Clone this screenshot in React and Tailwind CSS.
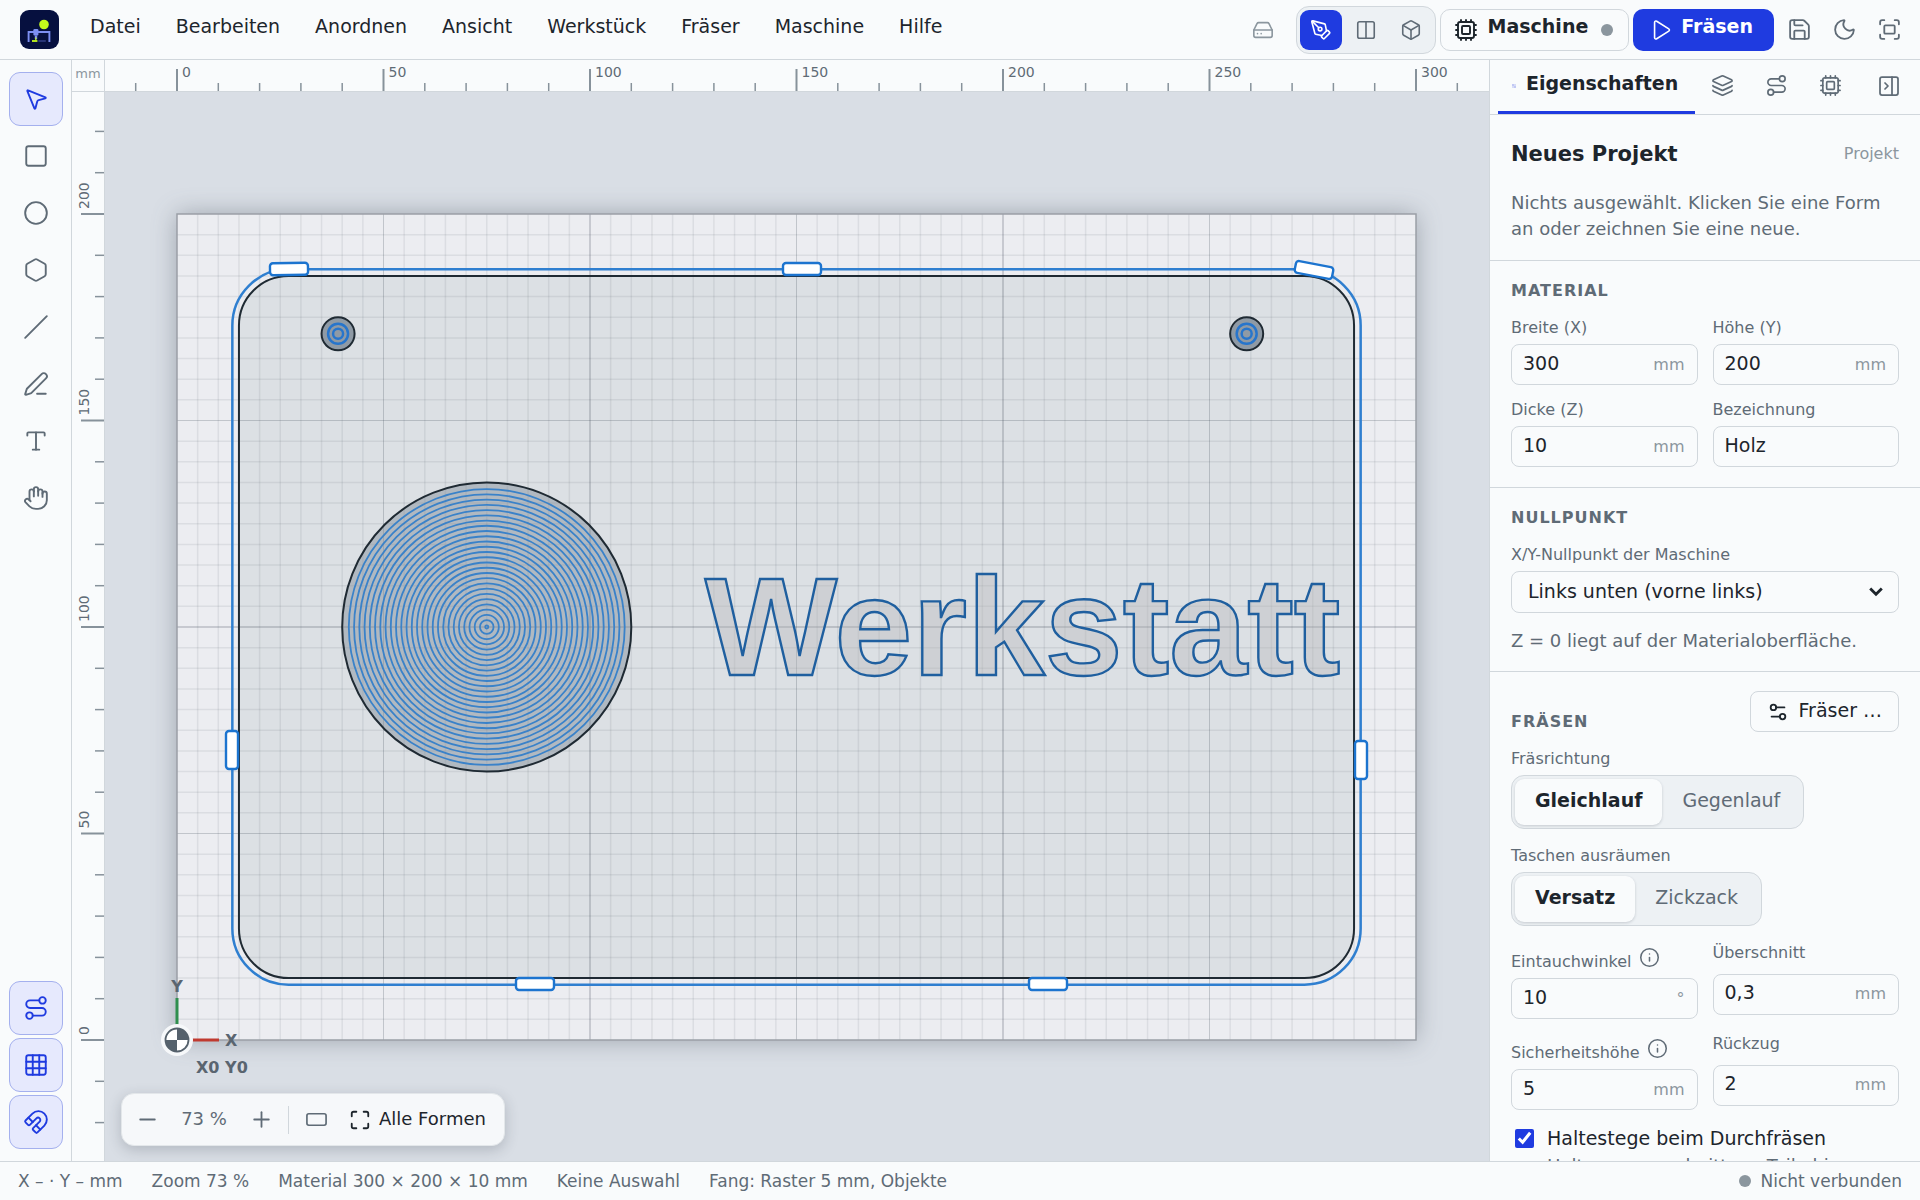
import React, { useState } from "react";
import {
  Box,
  Circle,
  Columns2,
  Cpu,
  Fullscreen,
  Grid3x3,
  Hand,
  HardDrive,
  Hexagon,
  Info,
  Layers,
  Magnet,
  Maximize,
  Minus,
  Moon,
  MousePointer2,
  PanelRightClose,
  PenLine,
  PenTool,
  Plus,
  RectangleHorizontal,
  Route,
  Save,
  Settings2,
  Slash,
  Square,
  Type,
} from "lucide-react";

const MENU = ["Datei", "Bearbeiten", "Anordnen", "Ansicht", "Werkstück", "Fräser", "Maschine", "Hilfe"];

/* Drawing scale: pixels per millimetre, and the machine origin on the canvas. */
const PX = 4.13;
const OX = 72;
const OY = 948;
const mx = (mm) => OX + mm * PX;
const my = (mm) => OY - mm * PX;
const steps = (from, to, by) => {
  const out = [];
  for (let v = from; v <= to; v += by) out.push(v);
  return out;
};

/* Grid lines: every 5 mm faint, every 50 mm darker, every 100 mm strongest. */
const gridLine = (v) => {
  if (v % 100 === 0) return { strokeOpacity: 0.28, strokeWidth: 1.5 };
  if (v % 50 === 0) return { strokeOpacity: 0.24, strokeWidth: 1 };
  return { strokeOpacity: 0.09, strokeWidth: 1.5 };
};

function Logo() {
  return (
    <svg viewBox="0 0 39 39" className="size-[39px] shrink-0" aria-label="Logo">
      <rect width="39" height="39" rx="9" fill="#06103f" />
      <circle cx="24" cy="14.5" r="4.8" fill="#c4f91c" />
      <path d="M8.6 32V22H29.4V32" fill="none" stroke="#7c8ff2" strokeWidth="1.9" />
      <rect x="13.4" y="19" width="5" height="6.4" rx="1.2" fill="#7c8ff2" />
      <path d="M14.8 25.4h2.4v3l-1.2 1.4-1.2-1.4z" fill="#7c8ff2" />
      <path d="M15.8 27.4v3" stroke="#c4f91c" strokeWidth="1.2" />
      <path d="M12 31h5.4" stroke="#c4f91c" strokeWidth="1.8" />
      <path d="M18.4 31h7.4" stroke="#3f4d9c" strokeWidth="1.2" />
    </svg>
  );
}

function IconButton({ label, children }) {
  return (
    <button
      type="button"
      aria-label={label}
      className="flex size-[42px] shrink-0 items-center justify-center rounded-lg text-[#5f6b76]"
    >
      {children}
    </button>
  );
}

function Header() {
  return (
    <header className="flex h-[60px] shrink-0 items-center border-b border-[#d1d7dc] bg-[#f9fbfc] pl-5 pr-[10px]">
      <Logo />
      <nav className="ml-[14px] flex gap-px" aria-label="Hauptmenü">
        {MENU.map((m) => (
          <button key={m} type="button" className="px-[17px] pb-2 pt-0 text-[19px] leading-6 text-[#1d252c]">
            {m}
          </button>
        ))}
      </nav>
      <div className="ml-auto flex items-center gap-1">
        <span className="mr-[18px] text-[#8b969e]">
          <HardDrive size={22} strokeWidth={1.75} />
        </span>
        <div className="flex gap-[3px] rounded-[13px] border border-[#d1d7dc] bg-[#edf1f4] p-[3px]">
          <button
            type="button"
            aria-label="2D"
            aria-pressed="true"
            className="flex h-10 w-[42px] items-center justify-center rounded-[9px] bg-[#1f3be0] text-white"
          >
            <PenTool size={22} strokeWidth={1.75} />
          </button>
          <button
            type="button"
            aria-label="Geteilt"
            className="flex h-10 w-[42px] items-center justify-center rounded-[9px] text-[#5f6b76]"
          >
            <Columns2 size={22} strokeWidth={1.75} />
          </button>
          <button
            type="button"
            aria-label="3D"
            className="flex h-10 w-[42px] items-center justify-center rounded-[9px] text-[#5f6b76]"
          >
            <Box size={22} strokeWidth={1.75} />
          </button>
        </div>
        <button
          type="button"
          className="flex h-[42px] items-center rounded-[10px] border border-[#d1d7dc] px-[13px] text-[19px] font-bold leading-6 text-[#1d252c]"
        >
          <Cpu size={24} strokeWidth={1.9} />
          <span className="ml-[10px] pb-2">Maschine</span>
          <span className="ml-[13px] mr-0.5 size-3 rounded-full bg-[#8b969e]" />
        </button>
        <button
          type="button"
          className="flex h-[42px] items-center rounded-[10px] bg-[#1f3be0] px-[17px] text-[19px] font-bold leading-6 text-white"
        >
          <svg
            viewBox="0 0 24 24"
            className="size-[22px]"
            fill="none"
            stroke="currentColor"
            strokeWidth="1.75"
            strokeLinejoin="round"
          >
            <path d="M5 3.6a1.5 1.5 0 0 1 2.3-1.2l13.2 8.4a1.4 1.4 0 0 1 0 2.4L7.3 21.6A1.5 1.5 0 0 1 5 20.4z" />
          </svg>
          <span className="ml-[9px] mr-1 pb-2">Fräsen</span>
        </button>
        <div className="flex gap-[3px]">
          <IconButton label="Speichern">
            <Save size={25} strokeWidth={1.75} />
          </IconButton>
          <IconButton label="Dunkler Modus">
            <Moon size={25} strokeWidth={1.75} />
          </IconButton>
          <IconButton label="Vollbild">
            <Fullscreen size={25} strokeWidth={1.75} />
          </IconButton>
        </div>
      </div>
    </header>
  );
}

function Tool({ label, active, children }) {
  return (
    <button
      type="button"
      aria-label={label}
      aria-pressed={active ? "true" : "false"}
      className={
        active
          ? "flex size-[54px] items-center justify-center rounded-[11px] border border-[#a4b0ee] bg-[#e6e9fd] text-[#1f3be0]"
          : "flex size-[54px] items-center justify-center rounded-[11px] text-[#5f6b76]"
      }
    >
      {children}
    </button>
  );
}

function Toolbar() {
  return (
    <aside className="flex w-[72px] shrink-0 flex-col items-center border-r border-[#d1d7dc] bg-[#f9fbfc] py-3">
      <div className="flex flex-col gap-[3px]">
        <Tool label="Auswahl" active>
          <MousePointer2 size={26} strokeWidth={1.75} />
        </Tool>
        <Tool label="Rechteck">
          <Square size={26} strokeWidth={1.75} />
        </Tool>
        <Tool label="Kreis">
          <Circle size={26} strokeWidth={1.75} />
        </Tool>
        <Tool label="Vieleck">
          <Hexagon size={26} strokeWidth={1.75} />
        </Tool>
        <Tool label="Linie">
          <Slash size={26} strokeWidth={1.75} />
        </Tool>
        <Tool label="Freihand">
          <PenLine size={26} strokeWidth={1.75} />
        </Tool>
        <Tool label="Text">
          <Type size={26} strokeWidth={1.75} />
        </Tool>
        <Tool label="Verschieben">
          <Hand size={26} strokeWidth={1.75} />
        </Tool>
      </div>
      <div className="mt-auto flex flex-col gap-[3px]">
        <Tool label="Fräswege" active>
          <Route size={26} strokeWidth={1.75} />
        </Tool>
        <Tool label="Raster" active>
          <Grid3x3 size={26} strokeWidth={1.75} />
        </Tool>
        <Tool label="Fang" active>
          <Magnet size={26} strokeWidth={1.75} />
        </Tool>
      </div>
    </aside>
  );
}

function TopRuler() {
  return (
    <svg className="h-full w-full text-[#5f6b76]" aria-hidden="true">
      {steps(-10, 310, 10).map((v) => (
        <line
          key={v}
          x1={mx(v)}
          x2={mx(v)}
          y1={v % 50 === 0 ? 9 : 23}
          y2="31"
          stroke="#87929b"
          strokeWidth={v % 50 === 0 ? 2 : 1.5}
        />
      ))}
      {steps(0, 300, 50).map((v) => (
        <text key={v} x={mx(v) + 5} y="17" fontSize="14" fill="currentColor">
          {v}
        </text>
      ))}
    </svg>
  );
}

function LeftRuler() {
  return (
    <svg className="h-full w-full text-[#5f6b76]" aria-hidden="true">
      {steps(-20, 220, 10).map((v) => (
        <line
          key={v}
          y1={my(v)}
          y2={my(v)}
          x1={v % 50 === 0 ? 9 : 23}
          x2="32"
          stroke="#87929b"
          strokeWidth={v % 50 === 0 ? 2 : 1.5}
        />
      ))}
      {steps(0, 200, 50).map((v) => (
        <text
          key={v}
          transform={`translate(17 ${my(v) - 5}) rotate(-90)`}
          fontSize="14"
          fill="currentColor"
        >
          {v}
        </text>
      ))}
    </svg>
  );
}

/* Holding tabs along the outer contour: centre, and angle of the bar. */
const BRIDGES = [
  [184, 177, -1],
  [697, 177, 0],
  [1209, 178, 11],
  [127, 658, 90],
  [1256, 668, 90],
  [430, 892, 0],
  [943, 892, 0],
];

function Drawing() {
  const pocket = steps(0, 26, 1).map((n) => (33.4 - n * 1.27) * PX);
  return (
    <svg className="absolute inset-0 h-full w-full" role="img" aria-label="Zeichenfläche">
      <rect
        x={mx(0)}
        y={my(200)}
        width={300 * PX}
        height={200 * PX}
        fill="#ecedf1"
        className="drop-shadow-[0_0_12px_rgba(60,70,85,0.38)]"
      />
      <rect x={mx(15)} y={my(185)} width={270 * PX} height={170 * PX} rx={12 * PX} fill="#dce0e4" />
      {steps(5, 295, 5).map((v) => (
        <line key={v} x1={mx(v)} x2={mx(v)} y1={my(200)} y2={my(0)} stroke="#3a4652" {...gridLine(v)} />
      ))}
      {steps(5, 195, 5).map((v) => (
        <line key={v} x1={mx(0)} x2={mx(300)} y1={my(v)} y2={my(v)} stroke="#3a4652" {...gridLine(v)} />
      ))}
      <rect
        x={mx(0)}
        y={my(200)}
        width={300 * PX}
        height={200 * PX}
        fill="none"
        stroke="#9a9fa6"
        strokeWidth="1.5"
      />

      <rect
        x={mx(13.4)}
        y={my(186.6)}
        width={273.2 * PX}
        height={173.2 * PX}
        rx={13.6 * PX}
        fill="none"
        stroke="#2f7fd0"
        strokeWidth="2.5"
      />
      <rect
        x={mx(15)}
        y={my(185)}
        width={270 * PX}
        height={170 * PX}
        rx={12 * PX}
        fill="none"
        stroke="#1f2a33"
        strokeWidth="2"
      />

      {[39, 259].map((cx) => (
        <g key={cx} fill="none" stroke="#2775cc" strokeWidth="2.5">
          <circle cx={mx(cx)} cy={my(171)} r={4 * PX} fill="#8f9aa5" stroke="#1f2a33" strokeWidth="2" />
          <circle cx={mx(cx)} cy={my(171)} r="10" />
          <circle cx={mx(cx)} cy={my(171)} r="5" />
        </g>
      ))}

      <circle cx={mx(75)} cy={my(100)} r={35 * PX} fill="#86929d" fillOpacity="0.5" stroke="#1f2a33" strokeWidth="2" />
      <g fill="none" stroke="#3a82c9" strokeWidth="1.8">
        {pocket.map((r) => (
          <circle key={r} cx={mx(75)} cy={my(100)} r={r} />
        ))}
      </g>

      <text
        x="600"
        y="583"
        fontSize="140"
        fontWeight="700"
        fill="#b8babc"
        fillOpacity="0.4"
        stroke="#1f5f9f"
        strokeWidth="2.4"
        className="font-['Liberation_Sans',Arial,sans-serif]"
      >
        Werkstatt
      </text>

      {BRIDGES.map(([cx, cy, angle]) => (
        <rect
          key={`${cx}-${cy}`}
          x="-19"
          y="-6"
          width="38"
          height="12"
          rx="3"
          transform={`translate(${cx} ${cy}) rotate(${angle})`}
          fill="#ffffff"
          stroke="#1c74cf"
          strokeWidth="2.4"
        />
      ))}

      <g transform={`translate(${OX} ${OY})`}>
        <line x1="0" x2="0" y1="-14" y2="-42" stroke="#2f8f4e" strokeWidth="3" />
        <line x1="15" x2="42" y1="0" y2="0" stroke="#c03a30" strokeWidth="3" />
        <circle r="16" fill="#f6f8fa" />
        <circle r="11.5" fill="#ffffff" stroke="#55616c" strokeWidth="1.8" />
        <path d="M0 0V-11.5A11.5 11.5 0 0 1 11.5 0zM0 0V11.5A11.5 11.5 0 0 1 -11.5 0z" fill="#55616c" />
        <g fill="#5a6570" fontWeight="700" fontSize="16">
          <text x="0" y="-48" textAnchor="middle">Y</text>
          <text x="48" y="6">X</text>
          <text x="19" y="33">X0 Y0</text>
        </g>
      </g>
    </svg>
  );
}

function ZoomBar() {
  return (
    <div className="absolute bottom-[15px] left-4 flex h-[53px] items-center rounded-[13px] border border-[#e3e7ea] bg-[#f6f8fa] px-1 text-lg leading-6 text-[#5f6b76] shadow-[0_4px_14px_rgba(40,50,65,0.22)]">
      <button type="button" aria-label="Verkleinern" className="flex h-10 w-[42px] items-center justify-center">
        <Minus size={25} strokeWidth={1.75} />
      </button>
      <output className="w-[72px] pb-0.5 text-center">73 %</output>
      <button type="button" aria-label="Vergrößern" className="flex h-10 w-[42px] items-center justify-center">
        <Plus size={25} strokeWidth={1.75} />
      </button>
      <span className="mx-[6px] h-7 w-px bg-[#d1d7dc]" />
      <button type="button" aria-label="Material einpassen" className="flex h-10 w-[42px] items-center justify-center">
        <RectangleHorizontal size={23} strokeWidth={1.75} />
      </button>
      <button type="button" className="flex h-10 items-center gap-2 pl-3 pr-[14px] text-[#1d252c]">
        <Maximize size={22} strokeWidth={2} />
        <span className="pb-0.5">Alle Formen</span>
      </button>
    </div>
  );
}

function Workspace() {
  return (
    <main className="grid min-w-0 flex-1 grid-cols-[33px_minmax(0,1fr)] grid-rows-[32px_minmax(0,1fr)]">
      <div className="flex items-center justify-center border-b border-r border-[#d1d7dc] bg-[#f9fbfc] pb-1 text-[13px] leading-4 text-[#8b969e]">
        mm
      </div>
      <div className="overflow-hidden border-b border-[#d1d7dc] bg-[#f9fbfc]">
        <TopRuler />
      </div>
      <div className="overflow-hidden border-r border-[#d1d7dc] bg-[#f9fbfc]">
        <LeftRuler />
      </div>
      <div className="relative overflow-hidden bg-[#d9dee5]">
        <Drawing />
        <ZoomBar />
      </div>
    </main>
  );
}

function Field({ id, label, unit, value, info }) {
  return (
    <div className="grid gap-1.5">
      {info ? (
        <div className="flex h-[30px] items-end gap-[7px]">
          <label htmlFor={id} className="text-base leading-[21px] text-[#5f6b76]">
            {label}
          </label>
          <button type="button" aria-label={`Info zu ${label}`} className="self-center text-[#5f6b76]">
            <Info size={21} strokeWidth={1.75} />
          </button>
        </div>
      ) : (
        <label htmlFor={id} className="text-base leading-[21px] text-[#5f6b76]">
          {label}
        </label>
      )}
      <div className="flex h-[41px] items-center rounded-lg border border-[#d1d7dc] pl-[11px] pr-3">
        <input
          id={id}
          type="text"
          defaultValue={value}
          className="h-full w-0 min-w-0 flex-1 bg-transparent pb-1 text-[19px] text-[#1d252c] outline-none"
        />
        {unit ? <span className="text-base leading-5 text-[#8b969e]">{unit}</span> : null}
      </div>
    </div>
  );
}

function Segmented({ label, options }) {
  const [active, setActive] = useState(options[0]);
  return (
    <div className="grid justify-start gap-1.5">
      <span className="text-base leading-[21px] text-[#5f6b76]">{label}</span>
      <div
        role="group"
        aria-label={label}
        className="flex h-[54px] rounded-[13px] border border-[#d1d7dc] bg-[#edf1f4] p-[3px] text-[19px] leading-6"
      >
        {options.map((o) => (
          <button
            key={o}
            type="button"
            aria-pressed={o === active}
            onClick={() => setActive(o)}
            className={
              o === active
                ? "rounded-[9px] bg-[#f9fbfc] px-5 pb-1 font-bold text-[#1d252c] shadow-[0_1px_3px_rgba(40,50,65,0.2)]"
                : "rounded-[9px] px-5 pb-1 text-[#5f6b76]"
            }
          >
            {o}
          </button>
        ))}
      </div>
    </div>
  );
}

function Heading({ children }) {
  return <h3 className="text-base font-bold uppercase leading-5 tracking-[1px] text-[#5f6b76]">{children}</h3>;
}

function Panel() {
  return (
    <aside className="flex w-[431px] shrink-0 flex-col border-l border-[#d1d7dc] bg-[#f9fbfc]">
      <div role="tablist" className="flex h-[55px] shrink-0 border-b border-[#d1d7dc] pl-2 pr-[10px] text-[#5f6b76]">
        <button
          role="tab"
          type="button"
          aria-selected="true"
          className="flex w-[197px] items-center gap-2.5 border-b-[3px] border-[#1f3be0] pl-[14px] text-[19px] font-bold leading-6 text-[#1d252c]"
        >
          <svg viewBox="0 0 4 4" className="size-1 text-[#98a4ee]" aria-hidden="true">
            <path d="M0 1h4M0 3h4M1 0v2M3 2v2" stroke="currentColor" strokeWidth="0.7" />
          </svg>
          <span className="pb-1.5">Eigenschaften</span>
        </button>
        <button role="tab" type="button" aria-label="Ebenen" className="flex w-[54px] items-center justify-center pb-[3px]">
          <Layers size={23} strokeWidth={1.75} />
        </button>
        <button role="tab" type="button" aria-label="Fräswege" className="flex w-[54px] items-center justify-center pb-[3px]">
          <Route size={23} strokeWidth={1.75} />
        </button>
        <button role="tab" type="button" aria-label="Maschine" className="flex w-[54px] items-center justify-center pb-[3px]">
          <Cpu size={23} strokeWidth={1.75} />
        </button>
        <button type="button" aria-label="Leiste einklappen" className="ml-auto flex w-[42px] items-center justify-center pb-[3px]">
          <PanelRightClose size={24} strokeWidth={1.75} />
        </button>
      </div>

      <div className="min-h-0 flex-1 overflow-y-auto [scrollbar-width:none]">
        <section className="border-b border-[#d1d7dc] px-[21px] pb-[18px] pt-[26px]">
          <div className="flex items-center justify-between">
            <h2 className="text-[21px] font-bold leading-[26px] text-[#1d252c]">Neues Projekt</h2>
            <span className="text-base leading-5 text-[#8b969e]">Projekt</span>
          </div>
          <p className="mt-[23px] text-lg leading-[26px] text-[#5f6b76]">
            Nichts ausgewählt. Klicken Sie eine Form an oder zeichnen Sie eine neue.
          </p>
        </section>

        <section className="border-b border-[#d1d7dc] px-[21px] py-5">
          <Heading>Material</Heading>
          <div className="mt-4 grid grid-cols-2 gap-x-[15px] gap-y-[14px]">
            <Field id="breite" label="Breite (X)" unit="mm" value="300" />
            <Field id="hoehe" label="Höhe (Y)" unit="mm" value="200" />
            <Field id="dicke" label="Dicke (Z)" unit="mm" value="10" />
            <Field id="bezeichnung" label="Bezeichnung" value="Holz" />
          </div>
        </section>

        <section className="border-b border-[#d1d7dc] px-[21px] pb-[17px] pt-5">
          <Heading>Nullpunkt</Heading>
          <div className="mt-4 grid gap-1.5">
            <label htmlFor="nullpunkt" className="text-base leading-[21px] text-[#5f6b76]">
              X/Y-Nullpunkt der Maschine
            </label>
            <div className="relative">
              <select
                id="nullpunkt"
                className="block h-[42px] w-full appearance-none rounded-lg border border-[#d1d7dc] bg-transparent pb-0.5 pl-4 pr-10 text-[19px] text-[#1d252c]"
              >
                <option>Links unten (vorne links)</option>
              </select>
              <svg
                viewBox="0 0 14 10"
                className="pointer-events-none absolute right-4 top-4 h-[10px] w-[14px]"
                fill="none"
                stroke="#1d252c"
                strokeWidth="2.8"
              >
                <path d="M1.2 1.5 7 7.3 12.8 1.5" />
              </svg>
            </div>
          </div>
          <p className="mt-[15px] text-lg leading-[26px] text-[#5f6b76]">Z = 0 liegt auf der Materialoberfläche.</p>
        </section>

        <section className="grid gap-4 px-[21px] pt-[19px]">
          <div className="flex items-end justify-between">
            <Heading>Fräsen</Heading>
            <button
              type="button"
              className="flex h-[41px] items-center gap-2.5 rounded-lg border border-[#d1d7dc] px-4 text-[19px] leading-6 text-[#1d252c]"
            >
              <Settings2 size={22} strokeWidth={2} />
              <span className="pb-1">Fräser …</span>
            </button>
          </div>
          <Segmented label="Fräsrichtung" options={["Gleichlauf", "Gegenlauf"]} />
          <Segmented label="Taschen ausräumen" options={["Versatz", "Zickzack"]} />
          <div className="grid grid-cols-2 gap-x-[15px] gap-y-[14px]">
            <Field id="eintauch" label="Eintauchwinkel" unit="°" value="10" info />
            <Field id="ueberschnitt" label="Überschnitt" unit="mm" value="0,3" />
            <Field id="sicherheit" label="Sicherheitshöhe" unit="mm" value="5" info />
            <Field id="rueckzug" label="Rückzug" unit="mm" value="2" />
          </div>
          <div className="flex items-start gap-[13px] pl-1">
            <input id="stege" type="checkbox" defaultChecked className="mt-[3px] size-[19px] shrink-0 accent-[#1f3be0]" />
            <div>
              <label htmlFor="stege" className="block text-[19px] leading-6 text-[#1d252c]">
                Haltestege beim Durchfräsen
              </label>
              <p className="mt-[3px] text-lg leading-[26px] text-[#5f6b76]">
                Halten ausgeschnittene Teile bis zum Schluss fest.
              </p>
            </div>
          </div>
        </section>
      </div>
    </aside>
  );
}

function StatusBar() {
  return (
    <footer className="flex h-[39px] shrink-0 items-center gap-[29px] border-t border-[#d1d7dc] bg-[#f9fbfc] px-[18px] text-[17px] leading-5 text-[#5f6b76]">
      <span>X – · Y – mm</span>
      <span>Zoom 73 %</span>
      <span>Material 300 × 200 × 10 mm</span>
      <span>Keine Auswahl</span>
      <span>Fang: Raster 5 mm, Objekte</span>
      <span className="ml-auto flex items-center gap-[9px]">
        <span className="size-3 rounded-full bg-[#8b969e]" />
        Nicht verbunden
      </span>
    </footer>
  );
}

export default function App() {
  return (
    <div className="flex h-screen flex-col overflow-hidden bg-[#f9fbfc] font-['DejaVu_Sans',sans-serif]">
      <Header />
      <div className="flex min-h-0 flex-1">
        <Toolbar />
        <Workspace />
        <Panel />
      </div>
      <StatusBar />
    </div>
  );
}
